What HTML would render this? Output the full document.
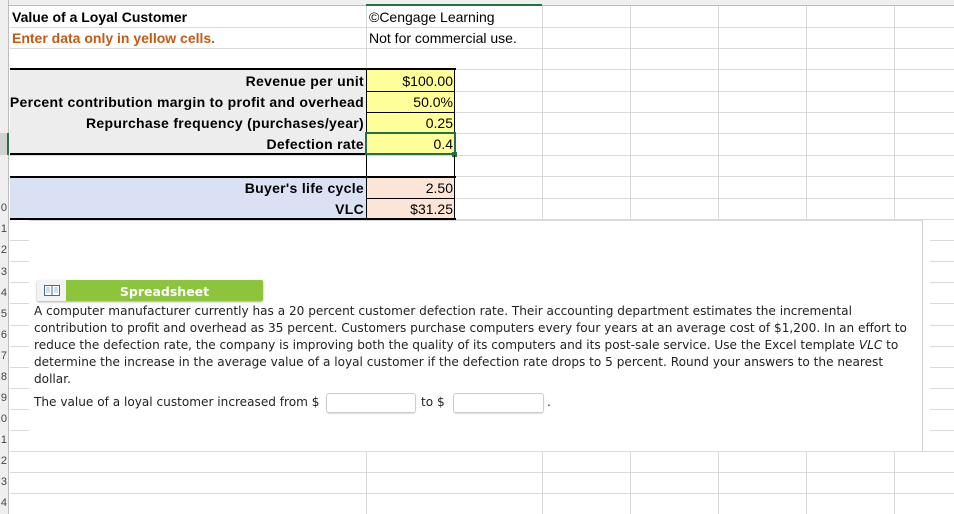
<!DOCTYPE html>
<html><head><meta charset="utf-8"><style>
*{margin:0;padding:0;box-sizing:border-box}
body{width:954px;height:514px;overflow:hidden;background:#fff;position:relative;font-family:"Liberation Sans",sans-serif}
.a{position:absolute}
.hl{position:absolute;height:1px;background:#dadada}
.vl{position:absolute;width:1px;background:#dadada}
.t{position:absolute;font-size:14px;white-space:nowrap;line-height:21px}
.b{font-weight:bold}
.r{text-align:right}
.q{font-family:"DejaVu Sans",Verdana,sans-serif;font-size:12.1px;color:#222;white-space:nowrap;position:absolute;left:34px;line-height:17px}
.n{position:absolute;left:-5px;width:12px;text-align:right;font-size:11px;color:#444;line-height:21px}
</style></head><body>
<div class="a" style="left:0;top:0;width:954px;height:6px;background:#efefef;border-bottom:1px solid #bdbdbd"></div>
<div class="a" style="left:366px;top:4px;width:176px;height:2px;background:#217346"></div>
<div class="a" style="left:0;top:0;width:9px;height:514px;background:#efefef;border-right:1px solid #bdbdbd"></div>
<div class="a" style="left:0;top:133px;width:9px;height:22px;background:#d2d2d2;border-right:2px solid #217346"></div>
<div class="n" style="top:198px">0</div>
<div class="n" style="top:219px">1</div>
<div class="n" style="top:240px">2</div>
<div class="n" style="top:262px">3</div>
<div class="n" style="top:283px">4</div>
<div class="n" style="top:304px">5</div>
<div class="n" style="top:325px">6</div>
<div class="n" style="top:346px">7</div>
<div class="n" style="top:367px">8</div>
<div class="n" style="top:388px">9</div>
<div class="n" style="top:409px">0</div>
<div class="n" style="top:430px">1</div>
<div class="n" style="top:451px">2</div>
<div class="n" style="top:472px">3</div>
<div class="n" style="top:493px">4</div>

<div class="hl" style="left:10px;top:27px;width:944px"></div>
<div class="hl" style="left:10px;top:48px;width:944px"></div>
<div class="hl" style="left:10px;top:69px;width:944px"></div>
<div class="hl" style="left:10px;top:91px;width:944px"></div>
<div class="hl" style="left:10px;top:112px;width:944px"></div>
<div class="hl" style="left:10px;top:133px;width:944px"></div>
<div class="hl" style="left:10px;top:155px;width:944px"></div>
<div class="hl" style="left:10px;top:176px;width:944px"></div>
<div class="hl" style="left:10px;top:198px;width:944px"></div>
<div class="hl" style="left:10px;top:219px;width:944px"></div>
<div class="hl" style="left:10px;top:451px;width:944px"></div>
<div class="hl" style="left:10px;top:472px;width:944px"></div>
<div class="hl" style="left:10px;top:493px;width:944px"></div>
<div class="vl" style="left:366px;top:6px;height:508px"></div>
<div class="vl" style="left:542px;top:6px;height:508px"></div>
<div class="vl" style="left:630px;top:6px;height:508px"></div>
<div class="vl" style="left:718px;top:6px;height:508px"></div>
<div class="vl" style="left:806px;top:6px;height:508px"></div>
<div class="vl" style="left:894px;top:6px;height:508px"></div>

<div class="t b" style="left:12px;top:7px;color:#000">Value of a Loyal Customer</div>
<div class="t b" style="left:12px;top:28px;color:#c65911">Enter data only in yellow cells.</div>
<div class="t" style="left:369px;top:7px">©Cengage Learning</div>
<div class="t" style="left:369px;top:28px">Not for commercial use.</div>

<div class="a" style="left:10px;top:70px;width:356px;height:84px;background:#ededed"></div>
<div class="a" style="left:366px;top:70px;width:88px;height:84px;background:#ffff99"></div>
<div class="a" style="left:10px;top:68px;width:446px;height:2px;background:#000"></div>
<div class="a" style="left:10px;top:153px;width:446px;height:2px;background:#000"></div>
<div class="a" style="left:366px;top:70px;width:1px;height:84px;background:#000"></div>
<div class="a" style="left:454px;top:70px;width:1px;height:84px;background:#000"></div>
<div class="a" style="left:366px;top:91px;width:88px;height:1px;background:#000"></div>
<div class="a" style="left:366px;top:112px;width:88px;height:1px;background:#000"></div>
<div class="a" style="left:366px;top:133px;width:88px;height:1px;background:#000"></div>
<div class="a" style="left:365px;top:132px;width:91px;height:23px;border:2px solid #217346"></div>
<div class="a" style="left:452px;top:152px;width:5px;height:5px;background:#217346"></div>
<div class="t b r" style="right:590px;top:71px;letter-spacing:0.3px">Revenue per unit</div>
<div class="t b r" style="right:590px;top:92px;letter-spacing:0.3px">Percent contribution margin to profit and overhead</div>
<div class="t b r" style="right:590px;top:113px;letter-spacing:0.3px">Repurchase frequency (purchases/year)</div>
<div class="t b r" style="right:590px;top:134px;letter-spacing:0.3px">Defection rate</div>
<div class="t r" style="right:501px;top:71px">$100.00</div>
<div class="t r" style="right:501px;top:92px">50.0%</div>
<div class="t r" style="right:501px;top:113px">0.25</div>
<div class="t r" style="right:501px;top:134px">0.4</div>
<div class="a" style="left:366px;top:155px;width:89px;height:22px;border-left:1px solid #000;border-right:1px solid #000"></div>

<div class="a" style="left:10px;top:177px;width:356px;height:42px;background:#d9e1f2"></div>
<div class="a" style="left:366px;top:177px;width:88px;height:42px;background:#fce4d6"></div>
<div class="a" style="left:10px;top:176px;width:446px;height:2px;background:#000"></div>
<div class="a" style="left:10px;top:218px;width:446px;height:2px;background:#000"></div>
<div class="a" style="left:366px;top:177px;width:1px;height:42px;background:#000"></div>
<div class="a" style="left:454px;top:177px;width:1px;height:42px;background:#000"></div>
<div class="a" style="left:366px;top:198px;width:88px;height:1px;background:#000"></div>
<div class="t b r" style="right:590px;top:178px;letter-spacing:0.3px">Buyer's life cycle</div>
<div class="t b r" style="right:590px;top:199px;letter-spacing:0.3px">VLC</div>
<div class="t r" style="right:501px;top:178px">2.50</div>
<div class="t r" style="right:501px;top:199px">$31.25</div>

<div class="a" style="left:29px;top:220px;width:894px;height:231px;background:#fff;border-top:1px solid #d8d8d8;border-right:1px solid #cfcfcf"></div>
<div class="hl" style="left:10px;top:240px;width:19px"></div>
<div class="hl" style="left:10px;top:261px;width:19px"></div>
<div class="hl" style="left:10px;top:282px;width:19px"></div>
<div class="hl" style="left:10px;top:303px;width:19px"></div>
<div class="hl" style="left:10px;top:325px;width:19px"></div>
<div class="hl" style="left:10px;top:346px;width:19px"></div>
<div class="hl" style="left:10px;top:367px;width:19px"></div>
<div class="hl" style="left:10px;top:388px;width:19px"></div>
<div class="hl" style="left:10px;top:409px;width:19px"></div>
<div class="hl" style="left:10px;top:430px;width:19px"></div>
<div class="hl" style="left:930px;top:240px;width:24px"></div>
<div class="hl" style="left:930px;top:261px;width:24px"></div>
<div class="hl" style="left:930px;top:282px;width:24px"></div>
<div class="hl" style="left:930px;top:303px;width:24px"></div>
<div class="hl" style="left:930px;top:325px;width:24px"></div>
<div class="hl" style="left:930px;top:346px;width:24px"></div>
<div class="hl" style="left:930px;top:367px;width:24px"></div>
<div class="hl" style="left:930px;top:388px;width:24px"></div>
<div class="hl" style="left:930px;top:409px;width:24px"></div>
<div class="hl" style="left:930px;top:430px;width:24px"></div>

<div class="a" style="left:37px;top:280px;width:226px;height:21px;border-radius:2px;box-shadow:0 1px 2px #aaa;background:#f3f3f3;overflow:hidden">
  <div class="a" style="left:29px;top:0;width:197px;height:21px;background:#8cc43c"></div>
  <svg class="a" style="left:7px;top:5px" width="16" height="12" viewBox="0 0 16 12"><rect x="0.5" y="0.5" width="15" height="10" fill="#fff" stroke="#3a6ea5"/><line x1="8" y1="1" x2="8" y2="10" stroke="#3a6ea5"/><path d="M2 3h4M2 5h4M2 7h4M10 3h4M10 5h4M10 7h4" stroke="#8aa9cc" stroke-width="0.8"/></svg>
  <div class="a" style="left:29px;top:0;width:197px;text-align:center;color:#fff;font-family:'DejaVu Sans',Verdana,sans-serif;font-weight:bold;font-size:12.5px;line-height:23px">Spreadsheet</div>
</div>

<div class="q" style="top:303px">A computer manufacturer currently has a 20 percent customer defection rate. Their accounting department estimates the incremental</div>
<div class="q" style="top:320px">contribution to profit and overhead as 35 percent. Customers purchase computers every four years at an average cost of $1,200. In an effort to</div>
<div class="q" style="top:337px">reduce the defection rate, the company is improving both the quality of its computers and its post-sale service. Use the Excel template <i>VLC</i> to</div>
<div class="q" style="top:354px">determine the increase in the average value of a loyal customer if the defection rate drops to 5 percent. Round your answers to the nearest</div>
<div class="q" style="top:371px">dollar.</div>
<div class="q" style="top:394px">The value of a loyal customer increased from $</div>
<div class="a" style="left:326px;top:393px;width:90px;height:20px;border:1px solid #ccc;border-radius:3px;box-shadow:0 1px 1px #ddd"></div>
<div class="q" style="left:421px;top:394px">to $</div>
<div class="a" style="left:453px;top:393px;width:91px;height:20px;border:1px solid #ccc;border-radius:3px;box-shadow:0 1px 1px #ddd"></div>
<div class="q" style="left:547px;top:394px">.</div>
</body></html>
